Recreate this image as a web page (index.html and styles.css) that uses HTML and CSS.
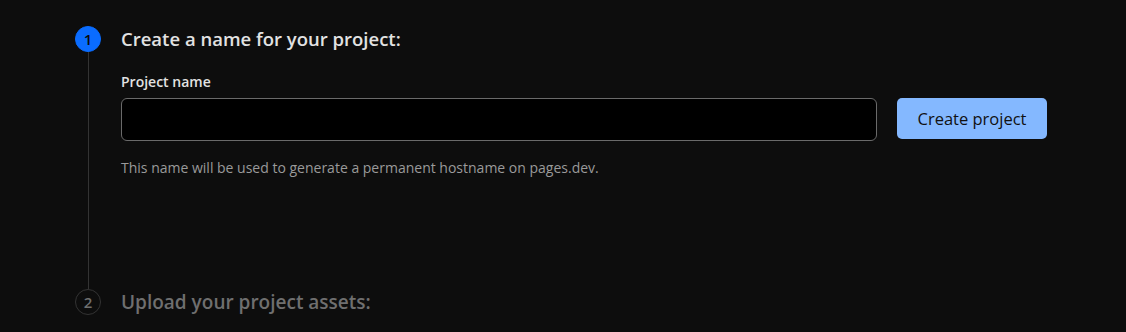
FILE: index.html
```html
<!DOCTYPE html>
<html lang="en" dir="ltr">
  <head>
    <meta charset="utf-8">
    <title>Create a project</title>
    <link rel="stylesheet" href="styles.css">
  </head>
  <body>
    <div class="steps">
      <div class="step active">
        <div class="rail">
          <div class="num">1</div>
          <div class="line"></div>
        </div>
        <div class="content">
          <h1>Create a name for your project:</h1>
          <label class="label" for="pname">Project name</label>
          <div class="row">
            <input class="field" id="pname" type="text">
            <button type="button" class="create">Create project</button>
          </div>
          <p class="hint">This name will be used to generate a permanent hostname on pages.dev.</p>
        </div>
      </div>
      <div class="step">
        <div class="rail">
          <div class="num">2</div>
        </div>
        <div class="content">
          <h1>Upload your project assets:</h1>
        </div>
      </div>
    </div>
  </body>
</html>
```

FILE: styles.css
```css
*{
  padding: 0px;
  margin: 0px;
  box-sizing: border-box;
}

:root{
  --bg: #0d0d0d;
  --blue: #0a6cff;
  --lightBlue: #84b8ff;
  --rail: #333333;
  --text: #e2e2e2;
  --muted: #9a9a9a;
  --dim: #6f6f6f;
}

body{
  background-color: var(--bg);
  font-family: "Open Sans", "Noto Sans", sans-serif;
  color: var(--text);
  height: 332px;
  overflow: hidden;
}

.steps{
  padding: 26px 0px 0px 75px;
}

.step{
  display: flex;
  gap: 20px;
}

.step.active{
  height: 263px;
}

.rail{
  width: 26px;
  display: flex;
  flex-direction: column;
  align-items: center;
}

.num{
  width: 26px;
  height: 26px;
  border-radius: 50%;
  border: 1px solid var(--rail);
  color: var(--dim);
  font-size: 15px;
  font-weight: 600;
  display: flex;
  align-items: center;
  justify-content: center;
}

.active .num{
  background-color: var(--blue);
  border-color: var(--blue);
  color: #0b0b0b;
}

.line{
  flex-grow: 1;
  width: 1px;
  background-color: var(--rail);
}

.content{
  width: 926px;
}

h1{
  font-size: 18.5px;
  font-weight: 600;
  line-height: 26px;
  color: var(--text);
}

.step:not(.active) h1{
  color: var(--dim);
  font-size: 19px;
}

.label{
  display: block;
  margin-top: 20px;
  font-size: 14px;
  font-weight: 600;
  line-height: 20px;
}

.row{
  display: flex;
  gap: 20px;
  margin-top: 6px;
  align-items: flex-start;
}

.field{
  width: 756px;
  height: 43px;
  background-color: #000000;
  border: 1px solid #6a6a6a;
  border-radius: 6px;
}

button{
  font-family: "Open Sans", "Noto Sans", sans-serif;
}

.create{
  width: 150px;
  height: 41px;
  border: none;
  border-radius: 5px;
  background-color: var(--lightBlue);
  color: #111111;
  font-size: 16.5px;
}

.hint{
  margin-top: 17px;
  font-size: 14px;
  line-height: 20px;
  color: var(--muted);
}
```
